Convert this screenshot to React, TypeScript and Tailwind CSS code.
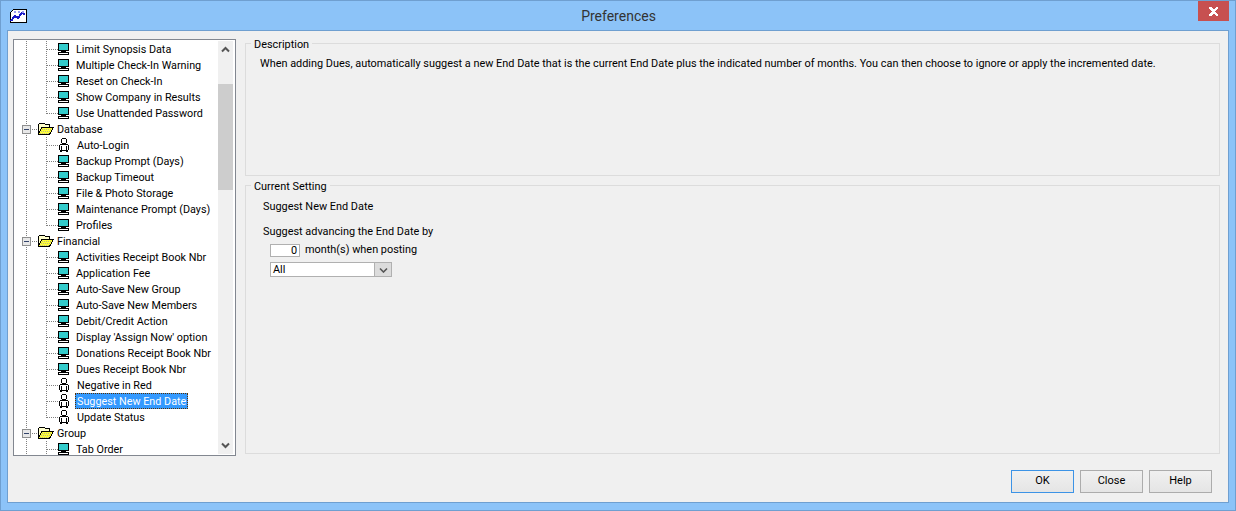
import React from "react";

const F = { fontFamily: 'Roboto, "Liberation Sans", Arial, sans-serif' };

function Computer() {
  return (
    <svg width="14" height="14" viewBox="0 0 14 14" shapeRendering="crispEdges" className="shrink-0">
      <rect x="0.5" y="1.5" width="10" height="7" fill="#33cccc" stroke="#000" />
      <rect x="3" y="9" width="5" height="1" fill="#000" />
      <rect x="0.5" y="10.5" width="10" height="2" fill="#fff" stroke="#000" />
    </svg>
  );
}
function Person() {
  return (
    <svg width="14" height="16" viewBox="0 0 14 16" shapeRendering="crispEdges" className="shrink-0">
      <path d="M4 1h4v1h1v4H8v1H4V6H3V2h1z" fill="#000" />
      <path d="M4 2h4v4H4z" fill="#fff" />
      <path d="M2 7h8v1h1v5h-1v2H2v-2H1V8h1z" fill="#000" />
      <path d="M2 8h8v5H2z" fill="#fff" />
      <path d="M3 9h1v5H3zM8 9h1v5H8zM4 13h4v1H4z" fill="#000" />
      <path d="M4 14h4v1H4z" fill="#fff" />
    </svg>
  );
}
function Folder() {
  return (
    <svg width="16" height="14" viewBox="0 0 16 14" shapeRendering="crispEdges" className="shrink-0">
      <path d="M0.5 12.5V2.5L2 1h4l1.5 1.5H11.5V5.5H4.5L1 12.5z" fill="#ffffcc" stroke="#000" />
      <path d="M0.5 12.5L3.5 5.5H15.5L11.5 12.5z" fill="#ffff33" stroke="#000" />
      <path d="M4 7.5H13M3 9.5H12M2 11.5H11" stroke="#b8b890" strokeDasharray="1 1" fill="none" />
    </svg>
  );
}

function Guides({ kind, last }: { kind: "group" | "item"; last?: boolean }) {
  if (kind === "group") {
    return (
      <svg width="24" height="16" viewBox="0 0 24 16" shapeRendering="crispEdges" className="shrink-0">
        <line x1="12.5" y1="0" x2="12.5" y2="16" stroke="#808080" strokeDasharray="1 1" />
        <line x1="16" y1="8.5" x2="24" y2="8.5" stroke="#808080" strokeDasharray="1 1" />
        <rect x="8.5" y="4.5" width="8" height="8" fill="#e8e8e8" stroke="#8e8f8f" />
        <rect x="10" y="8" width="5" height="1" fill="#34456b" />
      </svg>
    );
  }
  return (
    <svg width="44" height="16" viewBox="0 0 44 16" shapeRendering="crispEdges" className="shrink-0">
      <line x1="12.5" y1="0" x2="12.5" y2="16" stroke="#808080" strokeDasharray="1 1" />
      <line x1="32.5" y1="0" x2="32.5" y2={last ? 9 : 16} stroke="#808080" strokeDasharray="1 1" />
      <line x1="33" y1="8.5" x2="44" y2="8.5" stroke="#808080" strokeDasharray="1 1" />
    </svg>
  );
}

type Row = { t: string; k: "g" | "c" | "p"; last?: boolean; sel?: boolean };
const rows: Row[] = [
  { t: "Limit Synopsis Data", k: "c" },
  { t: "Multiple Check-In Warning", k: "c" },
  { t: "Reset on Check-In", k: "c" },
  { t: "Show Company in Results", k: "c" },
  { t: "Use Unattended Password", k: "c", last: true },
  { t: "Database", k: "g" },
  { t: "Auto-Login", k: "p" },
  { t: "Backup Prompt (Days)", k: "c" },
  { t: "Backup Timeout", k: "c" },
  { t: "File & Photo Storage", k: "c" },
  { t: "Maintenance Prompt (Days)", k: "c" },
  { t: "Profiles", k: "c", last: true },
  { t: "Financial", k: "g" },
  { t: "Activities Receipt Book Nbr", k: "c" },
  { t: "Application Fee", k: "c" },
  { t: "Auto-Save New Group", k: "c" },
  { t: "Auto-Save New Members", k: "c" },
  { t: "Debit/Credit Action", k: "c" },
  { t: "Display 'Assign Now' option", k: "c" },
  { t: "Donations Receipt Book Nbr", k: "c" },
  { t: "Dues Receipt Book Nbr", k: "c" },
  { t: "Negative in Red", k: "p" },
  { t: "Suggest New End Date", k: "p", sel: true },
  { t: "Update Status", k: "p", last: true },
  { t: "Group", k: "g" },
  { t: "Tab Order", k: "c" },
];

function TreeRow({ r }: { r: Row }) {
  if (r.k === "g") {
    return (
      <div className="flex h-4 shrink-0 items-center">
        <Guides kind="group" />
        <Folder />
        <span className="ml-[3px] mt-[2px] whitespace-nowrap text-[10.8px] text-black">{r.t}</span>
      </div>
    );
  }
  return (
    <div className="flex h-4 shrink-0 items-center">
      <Guides kind="item" last={r.last} />
      {r.k === "c" ? <Computer /> : <Person />}
      {r.sel ? (
        <span className="ml-[3px] h-4 whitespace-nowrap border border-dotted border-[#5a3000] bg-[#3399ff] px-px pt-px text-[10.8px] leading-[13px] text-white">
          {r.t}
        </span>
      ) : (
        <span className={`${r.k === "c" ? "ml-[4px]" : "ml-[5px]"} mt-[2px] whitespace-nowrap text-[10.8px] text-black`}>{r.t}</span>
      )}
    </div>
  );
}

function Scrollbar() {
  return (
    <div className="my-px mr-[2px] flex w-[15px] shrink-0 flex-col items-center bg-[#f0f0f0]">
      <div className="flex h-[17px] w-full shrink-0 items-center justify-center">
        <svg width="9" height="7" viewBox="0 0 9 7">
          <path d="M1 5.5L4.5 2L8 5.5" fill="none" stroke="#555" strokeWidth="2" />
        </svg>
      </div>
      <div className="mt-[26px] h-[106px] w-full bg-[#cdcdcd]" />
      <div className="flex-1" />
      <div className="flex h-[17px] w-full shrink-0 items-center justify-center">
        <svg width="9" height="7" viewBox="0 0 9 7">
          <path d="M1 1.5L4.5 5L8 1.5" fill="none" stroke="#555" strokeWidth="2" />
        </svg>
      </div>
    </div>
  );
}

function Btn({ label, primary }: { label: string; primary?: boolean }) {
  return (
    <button
      className={`h-[23px] w-[63px] border bg-gradient-to-b from-[#f0f0f0] to-[#e5e5e5] text-[11px] text-black ${
        primary ? "border-[#3c93e6]" : "border-[#acacac]"
      }`}
    >
      {label}
    </button>
  );
}

export default function App() {
  return (
    <div style={F} className="flex h-[511px] w-[1236px] flex-col overflow-hidden border border-[#6f9fd0] bg-[#8cc3f8]">
      <div className="flex h-[29px] shrink-0 items-start">
        <div className="ml-[9px] mt-[8px] shrink-0">
          <svg width="17" height="14" viewBox="0 0 17 14" shapeRendering="crispEdges">
            <path d="M0.5 13.5V3.5L3.5 0.5H16.5V13.5z" fill="#fff" stroke="#000" />
            <path d="M1 12L5 7l3 2 4-5 3 1" fill="none" stroke="#1a1ac8" strokeWidth="2" />
            <path d="M4 2h2v2H4zM8 2h2v2H8zM12 2h2v2h-2z" fill="#9a9af0" />
          </svg>
        </div>
        <div className="flex-1 pl-[12px] pt-[5px] text-center text-[14px] leading-5 text-[#333]">Preferences</div>
        <div className="mr-[6px] flex h-5 w-[31px] shrink-0 items-center justify-center bg-[#c75050]">
          <svg width="9" height="9" viewBox="0 0 9 9" shapeRendering="crispEdges">
            <path d="M0 0h2l2.5 2.5L7 0h2v1L6 4.5 9 8v1H7L4.5 6.5 2 9H0V8l3-3.5L0 1z" fill="#fff" />
          </svg>
        </div>
      </div>
      <div className="mx-[6px] mb-[7px] flex min-h-0 flex-1 flex-col border border-[#6f9fd0] bg-[#f0f0f0]">
        <div className="flex min-h-0 flex-1 pl-[5px] pr-[8px] pt-[8px]">
          <div className="flex h-[417px] w-[223px] shrink-0 overflow-hidden border border-[#828790] bg-white">
            <div className="flex min-w-0 flex-1 flex-col overflow-hidden pt-px">
              {rows.map((r) => (
                <TreeRow key={r.t} r={r} />
              ))}
            </div>
            <Scrollbar />
          </div>
          <div className="ml-[9px] flex min-w-0 flex-1 flex-col">
            <fieldset className="-mt-[2px] h-[139px] border border-[#dcdcdc]">
              <legend className="ml-[5px] px-[3px] text-[10.9px] leading-[13px] text-black">
                <span className="relative top-px">Description</span>
              </legend>
              <p className="ml-[14px] mt-[6px] whitespace-nowrap text-[10.9px] leading-[15px] text-black">
                When adding Dues, automatically suggest a new End Date that is the current End Date plus the indicated number of months. You can then choose to ignore or apply the incremented date.
              </p>
            </fieldset>
            <fieldset className="mt-[3px] h-[275px] border border-[#dcdcdc]">
              <legend className="ml-[5px] px-[3px] text-[10.9px] leading-[13px] text-black">
                <span className="relative top-px">Current Setting</span>
              </legend>
              <div className="ml-[17px] mt-[7px] flex flex-col items-start text-[10.9px] text-black">
                <div className="leading-[15px]">Suggest New End Date</div>
                <div className="mt-[10px] leading-[15px]">Suggest advancing the End Date by</div>
                <div className="ml-[7px] mt-[5px] flex h-[13px] items-center">
                  <div className="h-[13px] w-[30px] border border-[#b0b0b0] bg-white pr-[2px] text-right leading-[11px]">0</div>
                  <span className="ml-[5px]">month(s) when posting</span>
                </div>
                <div className="ml-[7px] mt-[5px] flex h-[15px] w-[122px] border border-[#b0b0b0] bg-white">
                  <span className="flex-1 pl-[2px] leading-[13px]">All</span>
                  <div className="flex w-[17px] items-center justify-center border-l border-[#b0b0b0] bg-[#dcdcdc]">
                    <svg width="9" height="6" viewBox="0 0 9 6"><path d="M1 1.5L4.5 5L8 1.5" fill="none" stroke="#555" strokeWidth="1.6" /></svg>
                  </div>
                </div>
              </div>
            </fieldset>
          </div>
        </div>
        <div className="flex shrink-0 justify-end gap-[6px] pb-[9px] pr-[16px]">
          <Btn label="OK" primary />
          <Btn label="Close" />
          <Btn label="Help" />
        </div>
      </div>
    </div>
  );
}
